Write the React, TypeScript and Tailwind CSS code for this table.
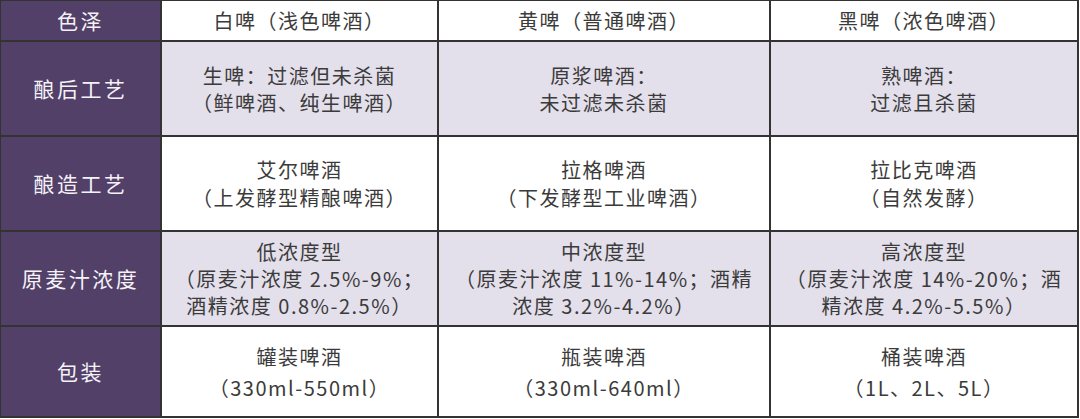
const rows = [
  {
    label: "酿后工艺",
    shade: true,
    leading: "leading-[27px]",
    cells: [
      ["生啤：过滤但未杀菌", "（鲜啤酒、纯生啤酒）"],
      ["原浆啤酒：", "未过滤未杀菌"],
      ["熟啤酒：", "过滤且杀菌"],
    ],
  },
  {
    label: "酿造工艺",
    shade: false,
    leading: "leading-[28px]",
    cells: [
      ["艾尔啤酒", "（上发酵型精酿啤酒）"],
      ["拉格啤酒", "（下发酵型工业啤酒）"],
      ["拉比克啤酒", "（自然发酵）"],
    ],
  },
  {
    label: "原麦汁浓度",
    shade: true,
    leading: "leading-[27px]",
    cells: [
      ["低浓度型", "（原麦汁浓度 2.5%-9%；", "酒精浓度 0.8%-2.5%）"],
      ["中浓度型", "（原麦汁浓度 11%-14%；酒精", "浓度 3.2%-4.2%）"],
      ["高浓度型", "（原麦汁浓度 14%-20%；酒", "精浓度 4.2%-5.5%）"],
    ],
  },
  {
    label: "包装",
    shade: false,
    leading: "leading-[31px]",
    cells: [
      ["罐装啤酒", "（330ml-550ml）"],
      ["瓶装啤酒", "（330ml-640ml）"],
      ["桶装啤酒", "（1L、2L、5L）"],
    ],
  },
];

const headers = ["白啤（浅色啤酒）", "黄啤（普通啤酒）", "黑啤（浓色啤酒）"];

export default function App() {
  return (
    <div
      className="h-[419px] w-[1080px] bg-white"
      style={{ fontFamily: '"Noto Sans CJK SC", "Noto Sans", sans-serif' }}
    >
      <div className="grid h-[418px] w-[1079px] grid-cols-[159px_275px_330px_306px] grid-rows-[39px_93px_93px_93px_89px] gap-[2px] bg-[#333333] pt-[1px] pr-[2px] pb-[2px] pl-[1px]">
        <div className="flex items-center justify-center bg-[#524068] text-[21px] tracking-[2.5px] text-[#f4f2f7]">
          色泽
        </div>
        {headers.map((h) => (
          <div
            key={h}
            className="flex items-center justify-center bg-white text-[20px] tracking-[1.5px] text-[#3b3b3b]"
          >
            {h}
          </div>
        ))}

        {rows.map((row) => (
          <>
            <div
              key={row.label}
              className="flex items-center justify-center bg-[#524068] text-[21px] tracking-[2.5px] text-[#f4f2f7]"
            >
              {row.label}
            </div>
            {row.cells.map((lines, i) => (
              <div
                key={row.label + i}
                className={`flex flex-col items-center justify-center text-[20px] tracking-[1.5px] whitespace-nowrap text-[#3b3b3b] ${row.leading} ${
                  row.shade ? "bg-[#e3dfeb]" : "bg-white"
                }`}
              >
                {lines.map((l) => (
                  <span key={l}>{l}</span>
                ))}
              </div>
            ))}
          </>
        ))}
      </div>
    </div>
  );
}
